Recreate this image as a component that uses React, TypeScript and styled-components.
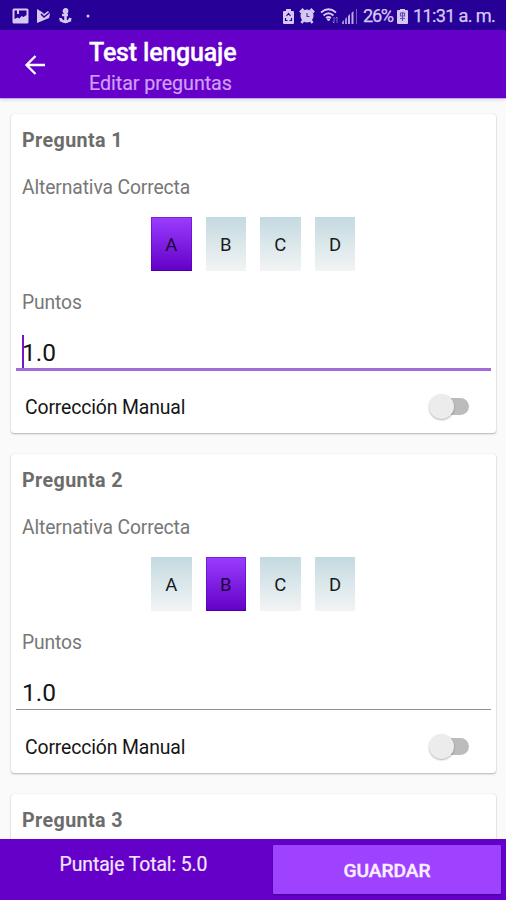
import React from "react";
import styled, { createGlobalStyle, css } from "styled-components";

const GlobalStyle = createGlobalStyle`
  * { box-sizing: border-box; }
  html, body { margin: 0; padding: 0; }
  body { font-family: Roboto, sans-serif; background: #fafafa; overflow: hidden; }
`;

const Screen = styled.main`
  display: flex;
  flex-direction: column;
  width: 506px;
  height: 900px;
  overflow: hidden;
  background: #fafafa;
`;

const StatusBar = styled.div`
  display: flex;
  flex: none;
  justify-content: space-between;
  height: 30px;
  padding: 0 12px 0 12px;
  background: #270097;
  color: #d5c8f3;
`;

const StatusGroup = styled.div`
  display: flex;
  align-items: center;
  height: 32px;
`;

const StatusIcon = styled.svg<{ $gap?: number }>`
  display: block;
  flex: none;
  margin-right: ${(p) => p.$gap ?? 0}px;
`;

const StatusText = styled.span<{ $width: number; $spacing: number }>`
  width: ${(p) => p.$width}px;
  font-size: 18.2px;
  line-height: 32px;
  letter-spacing: ${(p) => p.$spacing}px;
  white-space: nowrap;
  -webkit-text-stroke: 0.25px currentColor;
`;

const AppBar = styled.header`
  display: flex;
  flex: none;
  height: 69px;
  padding-left: 24px;
  background: #6500c9;
  border-bottom: 1px solid #c9a7ea;
  box-shadow: 0 1px 3px rgba(0, 0, 0, 0.12);
  color: #fff;
`;

const BackButton = styled.button`
  display: flex;
  width: 65px;
  height: 69px;
  padding: 0;
  align-items: center;
  border: 0;
  background: none;
  color: inherit;
`;

const Titles = styled.div`
  padding-top: 8px;
`;

const Title = styled.h1`
  margin: 0;
  font-size: 25px;
  font-weight: 500;
  line-height: 30px;
  letter-spacing: -0.18px;
  -webkit-text-stroke: 0.3px currentColor;
`;

const Subtitle = styled.p`
  margin: 0;
  font-size: 19.7px;
  line-height: 31px;
  letter-spacing: -0.05px;
  color: #cf9ff5;
  -webkit-text-stroke: 0.2px currentColor;
`;

const List = styled.section`
  display: flex;
  flex: 1;
  min-height: 0;
  flex-direction: column;
  gap: 21px;
  padding: 15px 10px 0 11px;
  overflow: hidden;
`;

const Card = styled.article`
  flex: none;
  height: 319px;
  padding: 11px 5px 0;
  border-radius: 3px;
  background: #fff;
  box-shadow: 0 1px 2px rgba(0, 0, 0, 0.28), 0 0 1px rgba(0, 0, 0, 0.14);
`;

const CardTitle = styled.h2`
  margin: 0 6px;
  font-size: 19.7px;
  font-weight: 700;
  line-height: 31px;
  letter-spacing: 0.4px;
  color: #6c6c6c;
`;

const Label = styled.div<{ $top: number }>`
  margin: ${(p) => p.$top}px 6px 0;
  font-size: 19.3px;
  line-height: 24px;
  letter-spacing: -0.12px;
  color: #777;
`;

const Options = styled.div`
  display: flex;
  justify-content: center;
  gap: 14px;
  margin-top: 17px;
  padding-right: 0.8px;
`;

const Option = styled.button<{ $active: boolean }>`
  width: 40.6px;
  height: 54px;
  padding: 1px 0 0;
  border: 0;
  font: 400 18.5px Roboto, sans-serif;
  color: #171b1d;
  background: linear-gradient(#c3dae1, #f3f4f4);
  ${(p) =>
    p.$active &&
    css`
      color: #1b0638;
      background: linear-gradient(#9a3dff, #6300c7);
      box-shadow: inset 0 0 0 1px rgba(75, 0, 165, 0.45), inset 0 -1px #4200a0;
    `}
`;

const Field = styled.div<{ $focused: boolean }>`
  display: flex;
  align-items: flex-end;
  height: ${(p) => (p.$focused ? 36 : 35)}px;
  margin: 20px 0 ${(p) => (p.$focused ? 18 : 19)}px;
  padding-left: 6px;
  border-bottom: ${(p) => (p.$focused ? "3px solid #a16bdc" : "1px solid #929292")};
`;

const Caret = styled.span`
  width: 2px;
  height: 33px;
  margin-right: -2px;
  background: #7415d2;
`;

const FieldValue = styled.span<{ $focused: boolean }>`
  font-size: 24.5px;
  line-height: ${(p) => (p.$focused ? 31 : 33)}px;
  letter-spacing: -0.05px;
  color: #151515;
`;

const SwitchRow = styled.label`
  display: flex;
  align-items: center;
  justify-content: space-between;
  height: 36px;
  padding: 0 22px 0 9px;
  font-size: 19.4px;
  letter-spacing: -0.14px;
  color: #151515;
`;

const SwitchTrack = styled.span`
  display: flex;
  align-items: center;
  width: 38px;
  height: 17px;
  margin-bottom: 2px;
  border-radius: 9px;
  background: #bcbcbc;
`;

const SwitchThumb = styled.span`
  flex: none;
  width: 25px;
  height: 25px;
  margin-left: -2px;
  border-radius: 50%;
  background: #ececec;
  box-shadow: 0 1px 2px rgba(0, 0, 0, 0.3);
`;

const BottomBar = styled.footer`
  display: flex;
  flex: none;
  height: 61px;
  padding: 6px 5px 6px 0;
  background: #6500c9;
`;

const Total = styled.div`
  width: 273px;
  padding-right: 6px;
  font-size: 19.4px;
  line-height: 39px;
  letter-spacing: -0.1px;
  text-align: center;
  color: #f3e5ff;
  -webkit-text-stroke: 0.2px currentColor;
`;

const SaveButton = styled.button`
  flex: 1;
  height: 49px;
  padding: 1px 0 0;
  border: 0;
  border-radius: 1px;
  background: #9e42ff;
  box-shadow: 0 1px 2px rgba(35, 0, 90, 0.5);
  font: 500 19.2px Roboto, sans-serif;
  letter-spacing: -0.05px;
  color: #fbeeff;
  -webkit-text-stroke: 0.4px currentColor;
`;

const ImageIcon = () => (
  <StatusIcon $gap={7} width="17" height="16" viewBox="0 0 17 16">
    <path fill="currentColor" fillRule="evenodd" d="M2 .5h13Q16.500.5 16.500 2v12q0 1.500-1.500 1.500H2Q.5 15.500.5 14V2Q.5.5 2 .5ZM2.500 2.500V11l3-1.500 2 1L9.500 8l2 1 3-2V2.500H7V6H5V2.500Z" />
  </StatusIcon>
);

const PlayIcon = () => (
  <StatusIcon $gap={8} width="15" height="15" viewBox="0 0 15 15">
    <path fill="currentColor" d="M1 0 6 3 8 5 12 2 14 5 13 9 6 12 1 14Z" />
    <path d="m5 5 3 3 5-4" fill="none" stroke="#270097" strokeWidth="1.500" />
  </StatusIcon>
);

const AnchorIcon = () => (
  <StatusIcon $gap={14} width="13" height="16" viewBox="0 0 13 16" fill="none" stroke="currentColor" strokeWidth="2.600">
    <circle cx="6.500" cy="3" r="1.600" />
    <path d="M6.500 5v9M3 7h6M1.500 10v1q1 2.500 5 3Q10.500 13.500 11.500 10M1 12l3 1M9 13l3-1" />
  </StatusIcon>
);

const DotIcon = () => (
  <StatusIcon width="4" height="4" viewBox="0 0 4 4">
    <circle cx="2" cy="2" r="1.500" fill="currentColor" />
  </StatusIcon>
);

const RecycleBatteryIcon = () => (
  <StatusIcon $gap={5} width="11" height="15" viewBox="0 0 11 15">
    <path fill="currentColor" d="M3 0h5v2h2q1 0 1 1v11q0 1-1 1H1q-1 0-1-1V3q0-1 1-1h2Z" />
    <path d="m3.500 7 2-2.500 2 2.500M2.500 9v2.500h2M8.500 9v2.500h-2" fill="none" stroke="#270097" strokeWidth="1.200" />
  </StatusIcon>
);

const AlarmIcon = () => (
  <StatusIcon $gap={5} width="16" height="16" viewBox="0 0 16 16">
    <circle cx="8" cy="8" r="6.500" fill="currentColor" />
    <path d="M1 4.500 4.500 1M11.500 1 15 4.500M2.500 15l2-3M13.500 15l-2-3" stroke="currentColor" strokeWidth="2.500" />
    <path d="M8 5v3.500h2.500" fill="none" stroke="#4f2dab" strokeWidth="1.100" />
  </StatusIcon>
);

const WifiIcon = () => (
  <StatusIcon $gap={3} width="19" height="16" viewBox="0 0 19 16" fill="none" stroke="currentColor">
    <path d="M1 4.500Q8.500-2 16 4.500M3.500 7.500Q8.500 3 13.500 7.500M6 10Q8.500 8 11 10" strokeWidth="1.700" />
    <path d="m7 11 1.500 2L10 11Z" fill="currentColor" />
    <path d="M14 9v6m-1.500-1.500L14 15M17 15V9m-1.500 1.500L17 9" strokeWidth="1" opacity=".5" />
  </StatusIcon>
);

const SignalIcon = () => (
  <StatusIcon $gap={5} width="16" height="15" viewBox="0 0 16 15" fill="currentColor">
    <path d="M0 15v-2l2-2v4ZM3 15v-5l2-2v7Z" opacity=".7" />
    <path d="M6 15V7l2-2v10ZM9.500 15V4l2-2v13Z" opacity=".85" />
    <path d="M14 0h1v15h-1Z" opacity=".45" />
  </StatusIcon>
);

const ChargingBatteryIcon = () => (
  <StatusIcon $gap={5} width="11" height="15" viewBox="0 0 11 15">
    <path fill="currentColor" d="M3 0h5v1h2q1 0 1 1v12q0 1-1 1H1q-1 0-1-1V2q0-1 1-1h2Z" />
    <path d="M3.500 4h4v3h-4ZM5.500 3v9M3 9.500h5" fill="none" stroke="#6a4bb6" strokeWidth="1.100" />
  </StatusIcon>
);

const BackArrow = () => (
  <svg width="22" height="22" viewBox="0 0 22 22" fill="none" stroke="currentColor" strokeWidth="2.300">
    <path d="M21 11H3M11.500 2 2.500 11l9 9" />
  </svg>
);

interface Question {
  id: number;
  answer: string;
  points: string;
  focused: boolean;
}

const questions: Question[] = [
  { id: 1, answer: "A", points: "1.0", focused: true },
  { id: 2, answer: "B", points: "1.0", focused: false },
  { id: 3, answer: "", points: "1.0", focused: false },
];

const QuestionCard = ({ question }: { question: Question }) => (
  <Card>
    <CardTitle>Pregunta {question.id}</CardTitle>
    {question.answer && (
      <>
        <Label $top={20}>Alternativa Correcta</Label>
        <Options>
          {["A", "B", "C", "D"].map((letter) => (
            <Option key={letter} $active={letter === question.answer}>
              {letter}
            </Option>
          ))}
        </Options>
        <Label $top={20}>Puntos</Label>
        <Field $focused={question.focused}>
          {question.focused && <Caret />}
          <FieldValue $focused={question.focused}>{question.points}</FieldValue>
        </Field>
        <SwitchRow>
          Corrección Manual
          <SwitchTrack>
            <SwitchThumb />
          </SwitchTrack>
        </SwitchRow>
      </>
    )}
  </Card>
);

export default function App() {
  return (
    <>
      <GlobalStyle />
      <Screen>
        <StatusBar>
          <StatusGroup>
            <ImageIcon />
            <PlayIcon />
            <AnchorIcon />
            <DotIcon />
          </StatusGroup>
          <StatusGroup>
            <RecycleBatteryIcon />
            <AlarmIcon />
            <WifiIcon />
            <SignalIcon />
            <StatusText $width={34} $spacing={-1.3}>26%</StatusText>
            <ChargingBatteryIcon />
            <StatusText $width={81} $spacing={-0.7}>11:31 a. m.</StatusText>
          </StatusGroup>
        </StatusBar>
        <AppBar>
          <BackButton aria-label="Atrás">
            <BackArrow />
          </BackButton>
          <Titles>
            <Title>Test lenguaje</Title>
            <Subtitle>Editar preguntas</Subtitle>
          </Titles>
        </AppBar>
        <List>
          {questions.map((q) => (
            <QuestionCard key={q.id} question={q} />
          ))}
        </List>
        <BottomBar>
          <Total>Puntaje Total: 5.0</Total>
          <SaveButton>GUARDAR</SaveButton>
        </BottomBar>
      </Screen>
    </>
  );
}
